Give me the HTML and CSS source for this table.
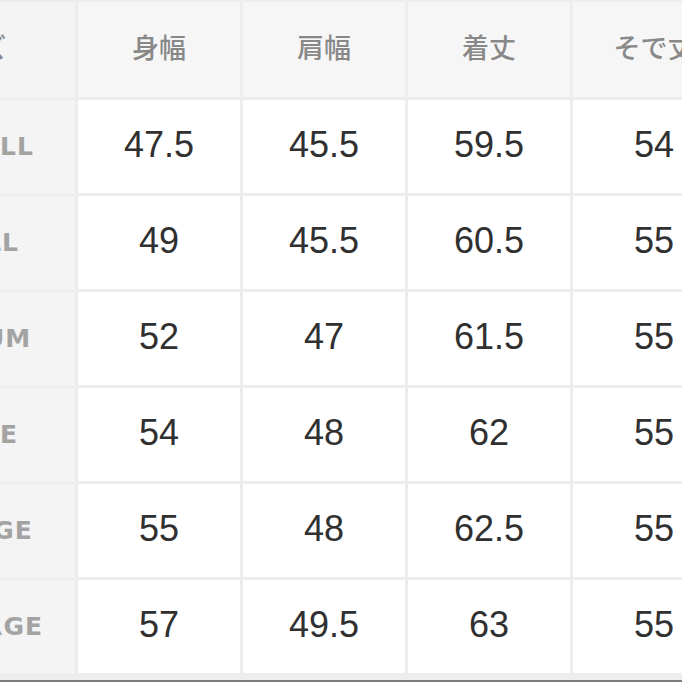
FILE: index.html
```html
<!DOCTYPE html>
<html lang="ja">
<head>
<meta charset="utf-8">
<title>サイズ表</title>
<link rel="stylesheet" href="styles.css">
</head>
<body>
<div class="chart">
  <div class="cell head corner">サイズ</div>
  <div class="cell head">身幅</div>
  <div class="cell head">肩幅</div>
  <div class="cell head">着丈</div>
  <div class="cell head">そで丈</div>

  <div class="cell side">X-SMALL</div>
  <div class="cell num">47.5</div>
  <div class="cell num">45.5</div>
  <div class="cell num">59.5</div>
  <div class="cell num">54</div>

  <div class="cell side">SMALL</div>
  <div class="cell num">49</div>
  <div class="cell num">45.5</div>
  <div class="cell num">60.5</div>
  <div class="cell num">55</div>

  <div class="cell side">MEDIUM</div>
  <div class="cell num">52</div>
  <div class="cell num">47</div>
  <div class="cell num">61.5</div>
  <div class="cell num">55</div>

  <div class="cell side">LARGE</div>
  <div class="cell num">54</div>
  <div class="cell num">48</div>
  <div class="cell num">62</div>
  <div class="cell num">55</div>

  <div class="cell side">X-LARGE</div>
  <div class="cell num">55</div>
  <div class="cell num">48</div>
  <div class="cell num">62.5</div>
  <div class="cell num">55</div>

  <div class="cell side">XX-LARGE</div>
  <div class="cell num">57</div>
  <div class="cell num">49.5</div>
  <div class="cell num">63</div>
  <div class="cell num">55</div>
</div>
</body>
</html>
```

FILE: styles.css
```css
html, body {
  margin: 0;
  padding: 0;
  overflow: hidden;
  background: #f2f2f2;
}

.chart {
  display: grid;
  grid-template-columns: 218px repeat(4, 162px);
  grid-template-rows: 95px repeat(6, 93px);
  gap: 3px;
  width: max-content;
  margin-left: -143px;
  padding-top: 2px;
  padding-bottom: 7px;
  background: #ededed;
  border-bottom: 2px solid #7c7c7c;
}

.cell {
  display: flex;
  align-items: center;
  justify-content: center;
  background: #ffffff;
  white-space: nowrap;
}

.head {
  background: #f6f6f6;
  font-family: "Noto Sans CJK JP", "Noto Sans", sans-serif;
  font-size: 27px;
  font-weight: 500;
  color: #888888;
  padding-bottom: 6px;
}

.corner {
  background: #f4f4f4;
}

.side {
  background: #f4f4f4;
  font-family: "DejaVu Sans", "Liberation Sans", sans-serif;
  font-size: 25px;
  font-weight: 700;
  letter-spacing: 1px;
  color: #a3a3a3;
  padding-left: 7px;
}

.num {
  font-family: "Liberation Sans", Arial, sans-serif;
  font-size: 36px;
  color: #303030;
  padding-bottom: 4px;
}
```
